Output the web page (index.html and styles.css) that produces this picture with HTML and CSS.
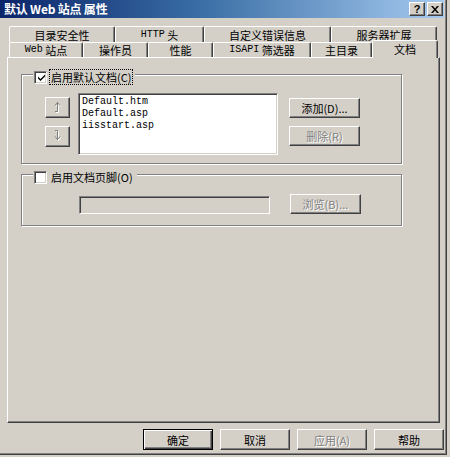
FILE: index.html
```html
<!DOCTYPE html>
<html>
<head>
<meta charset="utf-8">
<title>默认 Web 站点 属性</title>
<link rel="stylesheet" href="styles.css">
</head>
<body>
<div class="window">
  <div class="titlebar">
    <span class="title">默认 Web 站点 属性</span>
    <div class="caps">
      <span class="cap">?</span>
      <span class="cap"><svg width="8" height="7" viewBox="0 0 8 7"><path d="M0 0 L2 0 L4 2.5 L6 0 L8 0 L5 3.5 L8 7 L6 7 L4 4.5 L2 7 L0 7 L3 3.5 Z" fill="#000"/></svg></span>
    </div>
  </div>
  <div class="client">
    <div class="tabrow back">
      <div class="tab t-sec">目录安全性</div>
      <div class="tab t-http"><span class="lat">HTTP</span>&nbsp;头</div>
      <div class="tab t-err">自定义错误信息</div>
      <div class="tab t-ext">服务器扩展</div>
    </div>
    <div class="tabrow front">
      <div class="tab t-web"><span class="lat">Web</span>&nbsp;站点</div>
      <div class="tab t-op">操作员</div>
      <div class="tab t-perf">性能</div>
      <div class="tab t-isapi"><span class="lat">ISAPI</span>&nbsp;筛选器</div>
      <div class="tab t-home">主目录</div>
      <div class="tab t-doc active">文档</div>
    </div>
    <div class="panel">
      <div class="group g-default">
        <div class="legend">
          <span class="check"><svg width="9" height="9" viewBox="0 0 9 9"><path d="M1 3.5 L3.5 6 L8 1.5 L8 3.5 L3.5 8 L1 5.5 Z" fill="#000"/></svg></span>
          <span class="focus">启用默认文档(C)</span>
        </div>
        <div class="docrow">
          <div class="arrows">
            <div class="btn small disabled">
              <svg width="9" height="13" viewBox="0 0 9 13"><g fill="none" stroke-width="1"><path d="M5.5 2.5 L3 5.5 M5.5 2.5 L8 5.5 M5.5 2 V11.5 H3" stroke="#fff"/><path d="M4.5 1.5 L2 4.5 M4.5 1.5 L7 4.5 M4.5 1 V10.5 H2" stroke="#808080"/></g></svg>
            </div>
            <div class="btn small disabled">
              <svg width="9" height="13" viewBox="0 0 9 13"><g fill="none" stroke-width="1"><path d="M5.5 10.5 L3 7.5 M5.5 10.5 L8 7.5 M5.5 11 V1.5 H3" stroke="#fff"/><path d="M4.5 9.5 L2 6.5 M4.5 9.5 L7 6.5 M4.5 10 V0.5 H2" stroke="#808080"/></g></svg>
            </div>
          </div>
          <div class="listbox">
            <div class="item">Default.htm</div>
            <div class="item">Default.asp</div>
            <div class="item">iisstart.asp</div>
          </div>
          <div class="sidebtns">
            <div class="btn wide">添加(D)...</div>
            <div class="btn wide disabled">删除(R)</div>
          </div>
        </div>
      </div>
      <div class="group g-footer">
        <div class="legend">
          <span class="check"></span>
          <span class="plain">启用文档页脚(O)</span>
        </div>
        <div class="footrow">
          <div class="textbox"></div>
          <div class="btn wide disabled">浏览(B)...</div>
        </div>
      </div>
    </div>
    <div class="dlgbtns">
      <div class="btn dlg default">确定</div>
      <div class="btn dlg">取消</div>
      <div class="btn dlg disabled">应用(A)</div>
      <div class="btn dlg">帮助</div>
    </div>
  </div>
</div>
</body>
</html>
```

FILE: styles.css
```css
html, body {
  margin: 0;
  padding: 0;
}
body {
  width: 450px;
  height: 457px;
  overflow: hidden;
  background: #d4d0c8;
  font-family: "Noto Sans CJK SC", "Noto Sans", sans-serif;
  font-size: 11px;
  color: #000;
}
.window {
  width: 447px;
  height: 455px;
  box-sizing: border-box;
  border-right: 1px solid #404040;
  border-bottom: 1px solid #404040;
  box-shadow: inset -1px -1px #808080;
  display: flex;
  flex-direction: column;
}
.titlebar {
  height: 18px;
  margin-right: 2px;
  display: flex;
  align-items: center;
  padding-left: 4px;
  background: linear-gradient(90deg, #0a246a 0%, #3a6ea5 45%, #a6caf0 100%);
}
.title {
  color: #fff;
  font-weight: bold;
  font-size: 12px;
  line-height: 18px;
  letter-spacing: -0.2px;
}
.caps {
  margin-left: auto;
  margin-right: 1px;
  display: flex;
  gap: 2px;
}
.cap {
  width: 14px;
  height: 12px;
  display: flex;
  align-items: center;
  justify-content: center;
  background: #d4d0c8;
  border: 1px solid;
  border-color: #fff #404040 #404040 #fff;
  box-shadow: inset -1px -1px #808080;
  font: bold 11px "Liberation Sans", sans-serif;
  line-height: 12px;
}
.client {
  flex: 1;
  padding: 8px 0 0 7px;
  display: flex;
  flex-direction: column;
}
.tabrow {
  display: flex;
  padding-left: 2px;
}
.tabrow.back {
  height: 16px;
}
.tabrow.front {
  height: 15px;
}
.tab {
  box-sizing: border-box;
  border-top: 1px solid #fff;
  border-left: 1px solid #fff;
  border-right: 1px solid #404040;
  border-radius: 2px 2px 0 0;
  box-shadow: inset -1px 0 #808080;
  display: flex;
  align-items: center;
  justify-content: center;
  white-space: nowrap;
  line-height: 14px;
  background: #d4d0c8;
}
.lat {
  font-family: "Liberation Mono", monospace;
  font-size: 10px;
}
.t-sec { width: 106px; }
.t-http { width: 89px; }
.t-err { width: 127px; }
.t-ext { width: 106px; }
.t-web { width: 74px; }
.t-op { width: 65px; }
.t-perf { width: 65px; }
.t-isapi { width: 98px; }
.t-home { width: 61px; }
.t-doc { width: 66px; }
.tab.active {
  height: 18px;
  margin-top: -2px;
  margin-bottom: -1px;
  position: relative;
  z-index: 1;
  align-items: flex-start;
  padding-top: 1px;
}
.panel {
  width: 433px;
  height: 366px;
  box-sizing: border-box;
  border: 1px solid;
  border-color: #fff #404040 #404040 #fff;
  box-shadow: inset -1px -1px #808080;
  padding: 16px 0 0 13px;
}
.group {
  width: 381px;
  box-sizing: border-box;
  border: 1px solid #808080;
  box-shadow: inset 1px 1px #fff, 1px 1px #fff;
}
.g-default {
  height: 90px;
}
.g-footer {
  margin-top: 10px;
  height: 52px;
}
.legend {
  margin: -7px 0 0 11px;
  width: max-content;
  display: flex;
  align-items: center;
  gap: 3px;
  padding: 0 3px 0 1px;
  height: 15px;
  background: #d4d0c8;
}
.check {
  width: 13px;
  height: 13px;
  box-sizing: border-box;
  margin-top: 3px;
  background: #fff;
  border: 1px solid;
  border-color: #808080 #fff #fff #808080;
  box-shadow: inset 1px 1px #404040, inset -1px -1px #d4d0c8;
  display: flex;
  align-items: center;
  justify-content: center;
}
.check svg {
  margin: 1px 0 0 1px;
}
.focus {
  outline: 1px dotted #000;
  outline-offset: 0;
  padding: 0 1px;
  line-height: 14px;
  margin-top: 2px;
}
.plain {
  padding: 0 1px;
  line-height: 14px;
  margin-top: 2px;
}
.docrow {
  display: flex;
  margin-top: 10px;
}
.arrows {
  margin: 4px 0 0 23px;
  display: flex;
  flex-direction: column;
  gap: 8px;
}
.btn {
  box-sizing: border-box;
  background: #d4d0c8;
  border: 1px solid;
  border-color: #fff #404040 #404040 #fff;
  box-shadow: inset -1px -1px #808080;
  display: flex;
  align-items: center;
  justify-content: center;
  white-space: nowrap;
  line-height: 14px;
}
.btn.small {
  width: 25px;
  height: 21px;
}
.btn.disabled {
  color: #808080;
  text-shadow: 1px 1px 0 #fff;
}
.listbox {
  margin-left: 8px;
  width: 200px;
  height: 62px;
  box-sizing: border-box;
  background: #fff;
  border: 1px solid;
  border-color: #808080 #fff #fff #808080;
  box-shadow: inset 1px 1px #404040, inset -1px -1px #d4d0c8;
  padding: 2px 0 0 3px;
  font-family: "Liberation Mono", monospace;
  font-size: 10px;
  line-height: 12px;
}
.sidebtns {
  margin: 5px 0 0 11px;
  display: flex;
  flex-direction: column;
  gap: 8px;
}
.btn.wide {
  width: 71px;
  height: 20px;
}
.footrow {
  display: flex;
  align-items: center;
  margin: 11px 0 0 57px;
}
.textbox {
  width: 191px;
  height: 18px;
  box-sizing: border-box;
  background: #d4d0c8;
  border: 1px solid;
  border-color: #808080 #fff #fff #808080;
  box-shadow: inset 1px 1px #404040, inset -1px -1px #d4d0c8;
  margin-top: 2px;
}
.footrow .btn {
  margin-left: 20px;
}
.dlgbtns {
  display: flex;
  gap: 7px;
  margin-top: 6px;
  padding-left: 136px;
}
.btn.dlg {
  width: 70px;
  height: 21px;
}
.btn.default {
  border: 1px solid #000;
  box-shadow: inset 1px 1px #fff, inset -1px -1px #404040, inset -2px -2px #808080;
}
```
